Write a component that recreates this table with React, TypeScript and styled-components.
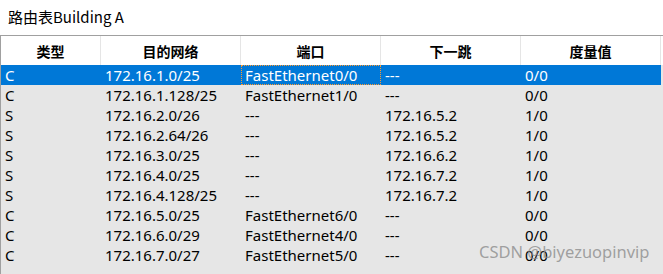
import React from "react";
import styled, { createGlobalStyle } from "styled-components";

const Global = createGlobalStyle`
  html, body { margin: 0; padding: 0; background: #ffffff; }
  body { font-family: "Noto Sans", "Noto Sans CJK SC", sans-serif; overflow: hidden; }
`;

const Page = styled.div`
  width: 663px;
  height: 274px;
  position: relative;
  overflow: hidden;
  background: #ffffff;
`;

const Title = styled.div`
  height: 35px;
  box-sizing: border-box;
  padding: 7px 0 0 8px;
  font-family: "Noto Sans CJK SC", sans-serif;
  font-size: 15px;
  color: #000;
  line-height: 20px;
`;

const Table = styled.div`
  border-top: 1px solid #a0a0a0;
  border-left: 1px solid #a0a0a0;
  background: #e6e6e6;
  height: 239px;
  box-sizing: border-box;
`;

const cols = "100px 140px 140px 140px 140px";

const HeaderRow = styled.div`
  display: grid;
  grid-template-columns: ${cols};
  height: 29px;
  background: #ffffff;
  width: 662px;
`;

const HeaderCell = styled.div`
  display: flex;
  align-items: center;
  justify-content: center;
  border-right: 1px solid #e5e5e5;
  font-family: "Noto Sans CJK SC", sans-serif;
  font-weight: 700;
  font-size: 14px;
  color: #000;
`;

const Row = styled.div<{ $selected?: boolean }>`
  display: grid;
  grid-template-columns: ${cols};
  height: 20px;
  width: 660px;
  background: ${(p) => (p.$selected ? "#0078d7" : "transparent")};
  color: ${(p) => (p.$selected ? "#ffffff" : "#000000")};
`;

const Cell = styled.div<{ $focus?: boolean }>`
  box-sizing: border-box;
  padding-left: ${(p) => (p.$focus ? "3px" : "4px")};
  font-size: 15px;
  white-space: nowrap;
  overflow: hidden;
  border: ${(p) => (p.$focus ? "1px dotted #ff9a2e" : "none")};
  line-height: ${(p) => (p.$focus ? "19px" : "21px")};
`;

const Watermark = styled.div`
  position: absolute;
  left: 479px;
  top: 242px;
  font-family: "Noto Sans", sans-serif;
  font-size: 16.5px;
  color: rgba(140, 140, 140, 0.8);
  line-height: 20px;
`;

const rows = [
  ["C", "172.16.1.0/25", "FastEthernet0/0", "---", "0/0"],
  ["C", "172.16.1.128/25", "FastEthernet1/0", "---", "0/0"],
  ["S", "172.16.2.0/26", "---", "172.16.5.2", "1/0"],
  ["S", "172.16.2.64/26", "---", "172.16.5.2", "1/0"],
  ["S", "172.16.3.0/25", "---", "172.16.6.2", "1/0"],
  ["S", "172.16.4.0/25", "---", "172.16.7.2", "1/0"],
  ["S", "172.16.4.128/25", "---", "172.16.7.2", "1/0"],
  ["C", "172.16.5.0/25", "FastEthernet6/0", "---", "0/0"],
  ["C", "172.16.6.0/29", "FastEthernet4/0", "---", "0/0"],
  ["C", "172.16.7.0/27", "FastEthernet5/0", "---", "0/0"],
];

const headers = ["类型", "目的网络", "端口", "下一跳", "度量值"];

export default function App() {
  return (
    <Page>
      <Global />
      <Title>路由表Building A</Title>
      <Table>
        <HeaderRow>
          {headers.map((h) => (
            <HeaderCell key={h}>{h}</HeaderCell>
          ))}
        </HeaderRow>
        {rows.map((r, i) => (
          <Row key={i} $selected={i === 0}>
            {r.map((c, j) => (
              <Cell key={j} $focus={i === 0 && j === 2}>
                {c}
              </Cell>
            ))}
          </Row>
        ))}
      </Table>
      <Watermark>CSDN @biyezuopinvip</Watermark>
    </Page>
  );
}
